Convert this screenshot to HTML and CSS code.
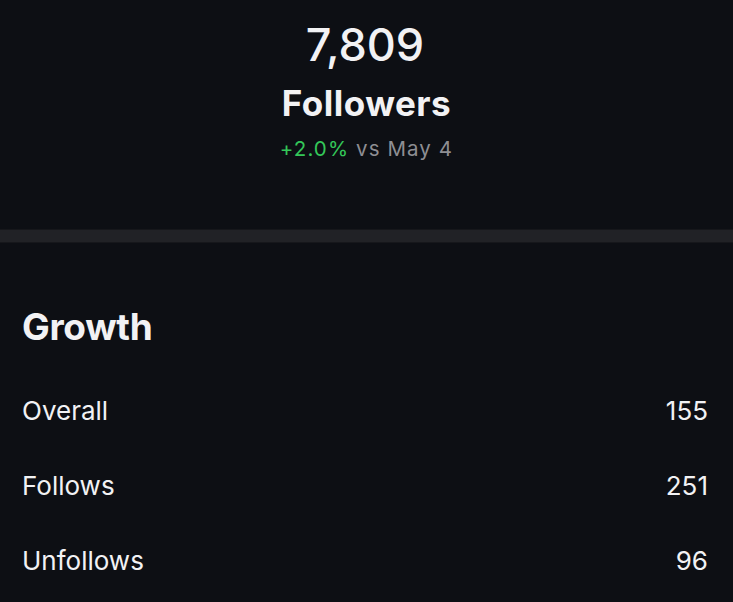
FILE: index.html
```html
<!DOCTYPE html>
<html>
<head>
<meta charset="utf-8">
<link rel="stylesheet" href="styles.css">
</head>
<body>
<div class="page">
  <section class="summary">
    <div class="count">7,809</div>
    <div class="label">Followers</div>
    <div class="delta"><span class="up">+2.0%</span> vs May 4</div>
  </section>
  <div class="divider"></div>
  <section class="growth">
    <h2 class="title">Growth</h2>
    <div class="row"><span>Overall</span><span>155</span></div>
    <div class="row"><span>Follows</span><span>251</span></div>
    <div class="row"><span>Unfollows</span><span>96</span></div>
  </section>
</div>
</body>
</html>
```
FILE: styles.css
```css
html, body {
  margin: 0;
  padding: 0;
  background: #0d0f14;
}
body {
  font-family: Inter, "Liberation Sans", sans-serif;
  color: #f2f2f4;
  width: 733px;
  height: 602px;
  overflow: hidden;
}
.summary {
  height: 229px;
  display: flex;
  flex-direction: column;
  align-items: center;
  padding-top: 18px;
  box-sizing: border-box;
}
.count {
  font-size: 45px;
  line-height: 54px;
  font-weight: 500;
  margin-left: -3px;
}
.label {
  font-size: 35px;
  line-height: 42px;
  font-weight: 700;
  letter-spacing: 0.5px;
  margin-top: 10px;
}
.delta {
  font-size: 20.5px;
  line-height: 26px;
  letter-spacing: 1.1px;
  color: #8e8e93;
  margin-top: 12px;
}
.up {
  color: #34c759;
}
.divider {
  height: 12px;
  background: #212226;
  border-top: 1px solid #16171b;
  border-bottom: 1px solid #16171b;
}
.growth {
  padding: 0 25px 0 22px;
}
.title {
  margin: 62px 0 0;
  font-size: 37px;
  line-height: 44px;
  font-weight: 700;
  letter-spacing: -0.3px;
}
.row {
  display: flex;
  justify-content: space-between;
  font-size: 26px;
  line-height: 32px;
  margin-top: 43px;
}
.title + .row {
  margin-top: 45.5px;
}
```
